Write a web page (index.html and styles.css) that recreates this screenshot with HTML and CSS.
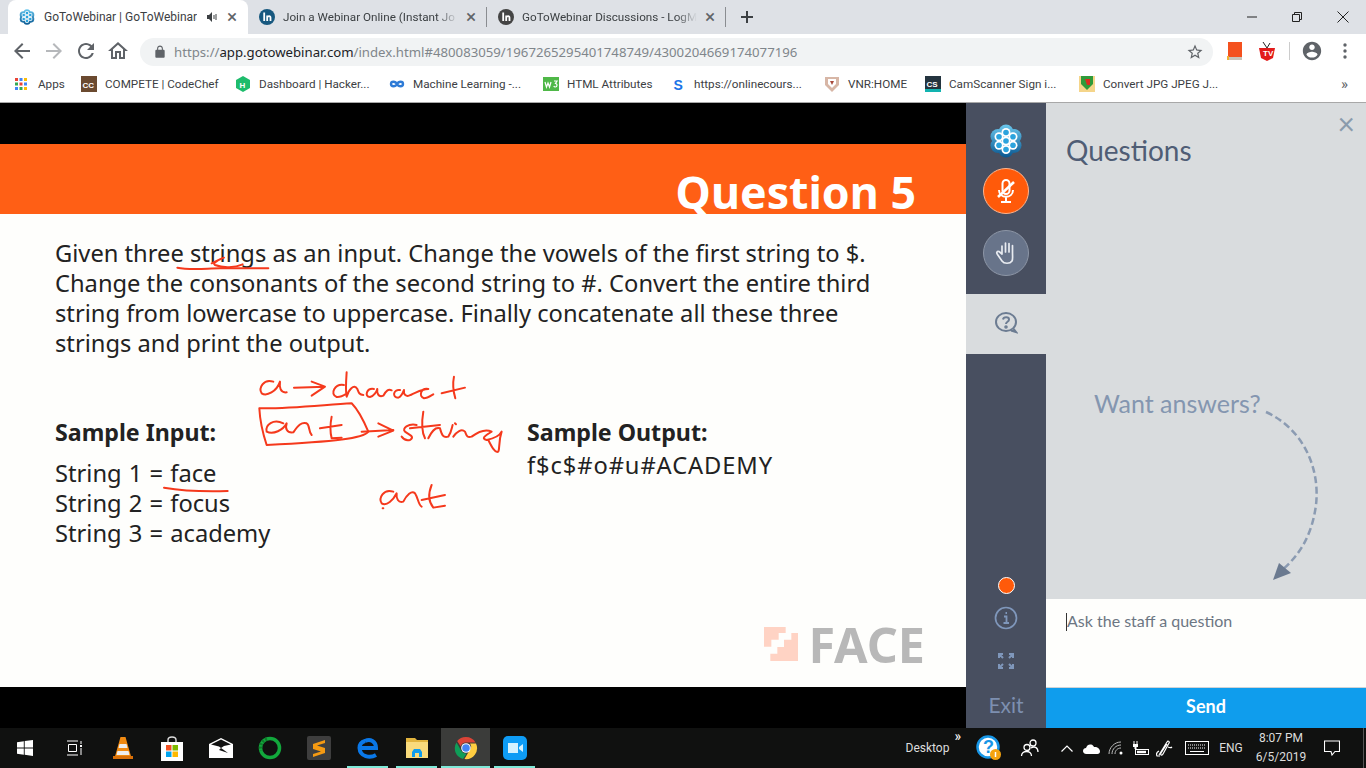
FILE: index.html
```html
<!doctype html>
<html lang="en">
  <head>
    <meta charset="UTF-8" />
    <meta name="viewport" content="width=device-width, initial-scale=1.0" />
    <title>GoToWebinar | GoToWebinar</title>
    <link rel="stylesheet" href="styles.css">
  </head>
  <body>
    <svg class="defs" width="0" height="0">
      <defs>
        <linearGradient id="gtw" gradientUnits="userSpaceOnUse" x1="0" y1="0" x2="0" y2="34">
          <stop offset="0" stop-color="#6ccaf0" />
          <stop offset="1" stop-color="#07558f" />
        </linearGradient>
        <symbol id="gtw-logo" viewBox="0 0 32 34">
          <g fill="url(#gtw)">
            <circle cx="16" cy="8" r="7.500" />
            <circle cx="8" cy="12.500" r="7.500" />
            <circle cx="24" cy="12.500" r="7.500" />
            <circle cx="8" cy="21.500" r="7.500" />
            <circle cx="24" cy="21.500" r="7.500" />
            <circle cx="16" cy="26" r="7.500" />
            <circle cx="16" cy="17" r="7.500" />
          </g>
          <g fill="#fff">
            <circle cx="16" cy="8.500" r="4.500" />
            <circle cx="9" cy="12.800" r="4.500" />
            <circle cx="23" cy="12.800" r="4.500" />
            <circle cx="9" cy="21.200" r="4.500" />
            <circle cx="23" cy="21.200" r="4.500" />
            <circle cx="16" cy="25.500" r="4.500" />
            <circle cx="16" cy="17" r="4.500" />
          </g>
          <g fill="#2ba3dd">
            <circle cx="16" cy="8.500" r="2.800" />
            <circle cx="9" cy="12.800" r="2.800" />
            <circle cx="23" cy="12.800" r="2.800" />
            <circle cx="9" cy="21.200" r="2.800" />
            <circle cx="23" cy="21.200" r="2.800" />
            <circle cx="16" cy="25.500" r="2.800" />
            <circle cx="16" cy="17" r="2.800" />
          </g>
        </symbol>
        <symbol id="in-logo" viewBox="0 0 16 16">
          <circle cx="8" cy="8" r="8" />
          <path fill="none" stroke="#fff" stroke-width="1.800" d="M5.200 3.500v8.500M8.200 12V6.500M8.200 8.300c.6-1.500 3.300-2 3.300.5V12" />
        </symbol>
      </defs>
    </svg>

    <header class="browser">
      <div class="tab-strip">
        <div class="tab active">
          <svg class="favicon"><use href="#gtw-logo" /></svg>
          <span class="tab-title">GoToWebinar | GoToWebinar</span>
          <svg class="tab-sound" width="12" height="12" viewBox="0 0 12 12"><path fill="#3c4043" d="M1 4h2l3-3v10L3 8H1z" /><path fill="none" stroke="#3c4043" d="M8 4v4M10 3v6" /></svg>
          <span class="tab-close">×</span>
        </div>
        <div class="tab">
          <svg class="favicon in-blue"><use href="#in-logo" /></svg>
          <span class="tab-title fade">Join a Webinar Online (Instant Jo</span>
          <span class="tab-close">×</span>
        </div>
        <div class="tab">
          <svg class="favicon in-dark"><use href="#in-logo" /></svg>
          <span class="tab-title fade">GoToWebinar Discussions - LogM</span>
          <span class="tab-close">×</span>
        </div>
        <svg class="new-tab" width="12" height="12" viewBox="0 0 12 12"><path stroke="#3c4043" stroke-width="2" d="M6 0v12M0 6h12" /></svg>
        <div class="window-btns">
          <svg width="10" height="10" viewBox="0 0 10 10"><path stroke="#222" d="M0 5h10" /></svg>
          <svg width="10" height="10" viewBox="0 0 10 10"><path fill="none" stroke="#222" d="M.500 2.500h7v7h-7zM2.500 2.500v-2h7v7h-2" /></svg>
          <svg width="12" height="12" viewBox="0 0 12 12"><path stroke="#222" d="M.5.500l11 11M11.500.500l-11 11" /></svg>
        </div>
      </div>

      <div class="toolbar">
        <svg class="nav-icon" viewBox="0 0 24 24"><path fill="#5f6368" d="M20 11H7.830l5.590-5.590L12 4l-8 8 8 8 1.410-1.410L7.830 13H20v-2z" /></svg>
        <svg class="nav-icon" viewBox="0 0 24 24"><path fill="#b6b8bb" d="M4 11h12.170l-5.590-5.590L12 4l8 8-8 8-1.410-1.410L16.170 13H4v-2z" /></svg>
        <svg class="nav-icon" viewBox="0 0 24 24"><path fill="#5f6368" d="M17.650 6.350C16.200 4.900 14.210 4 12 4c-4.420 0-7.990 3.580-7.990 8s3.570 8 7.990 8c3.730 0 6.840-2.550 7.730-6h-2.080c-.82 2.330-3.040 4-5.650 4-3.310 0-6-2.690-6-6s2.690-6 6-6c1.660 0 3.140.69 4.220 1.780L13 11h7V4l-2.350 2.350z" /></svg>
        <svg class="nav-icon" viewBox="0 0 24 24"><path fill="#5f6368" d="M12 5.690l5 4.500V18h-2v-6H9v6H7v-7.810l5-4.500M12 3L2 12h3v8h6v-6h2v6h6v-8h3L12 3z" /></svg>
        <div class="omnibox">
          <svg class="lock" width="14" height="14" viewBox="0 0 24 24"><path fill="#5f6368" d="M18 8h-1V6c0-2.760-2.240-5-5-5S7 3.240 7 6v2H6c-1.100 0-2 .9-2 2v10c0 1.100.9 2 2 2h12c1.100 0 2-.9 2-2V10c0-1.100-.9-2-2-2zm-2.900 0H8.900V6c0-1.710 1.390-3.100 3.100-3.100 1.710 0 3.100 1.390 3.100 3.100v2z" /></svg>
          <span class="url">https://<b>app.gotowebinar.com</b>/index.html#480083059/1967265295401748749/4300204669174077196</span>
          <svg class="star" width="18" height="18" viewBox="0 0 24 24"><path fill="#5f6368" d="M22 9.240l-7.190-.62L12 2 9.190 8.630 2 9.240l5.460 4.730L5.820 21 12 17.270 18.180 21l-1.630-7.030L22 9.240zM12 15.400l-3.760 2.270 1-4.280-3.320-2.880 4.380-.38L12 6.100l1.710 4.040 4.380.38-3.320 2.880 1 4.280L12 15.400z" /></svg>
        </div>
        <div class="extensions">
          <svg width="16" height="18" viewBox="0 0 16 18"><path fill="#f4511e" d="M1 0h14v15H1z" /><path fill="#c9c4ba" d="M1 15h14v3H1z" /><path fill="#f2b233" d="M0 14h2v4H0z" /></svg>
          <svg width="20" height="20" viewBox="0 0 20 20"><path fill="#e21b1b" d="M2 7h16l-2 10-6 3-6-3z" /><path stroke="#222" d="M10 7L6 1M10 7l3-5" /><text x="6" y="15" class="tv-text">TV</text></svg>
          <i class="ext-sep"></i>
          <svg width="22" height="22" viewBox="0 0 24 24"><path fill="#5f6368" d="M12 2C6.480 2 2 6.480 2 12s4.480 10 10 10 10-4.480 10-10S17.520 2 12 2zm0 3c1.660 0 3 1.340 3 3s-1.340 3-3 3-3-1.340-3-3 1.340-3 3-3zm0 14.200c-2.500 0-4.710-1.280-6-3.220.03-1.990 4-3.080 6-3.080 1.990 0 5.970 1.090 6 3.080-1.290 1.940-3.500 3.220-6 3.220z" /></svg>
          <svg width="4" height="16" viewBox="0 0 4 16"><g fill="#5f6368"><circle cx="2" cy="2" r="1.700" /><circle cx="2" cy="8" r="1.700" /><circle cx="2" cy="14" r="1.700" /></g></svg>
        </div>
      </div>

      <div class="bookmarks">
        <a class="bm bm-apps">
          <svg width="12" height="12" viewBox="0 0 12 12">
            <path fill="#ea4335" d="M0 0h3v3H0z" /><path fill="#4285f4" d="M4.500 0h3v3h-3z" /><path fill="#fbbc05" d="M9 0h3v3H9z" />
            <path fill="#34a853" d="M0 4.500h3v3H0z" /><path fill="#ea4335" d="M4.500 4.500h3v3h-3z" /><path fill="#4285f4" d="M9 4.500h3v3H9z" />
            <path fill="#4285f4" d="M0 9h3v3H0z" /><path fill="#34a853" d="M4.500 9h3v3h-3z" /><path fill="#fbbc05" d="M9 9h3v3H9z" />
          </svg>
          Apps
        </a>
        <a class="bm">
          <svg width="16" height="16" viewBox="0 0 16 16"><path fill="#6b4a30" d="M0 0h16v16H0z" /><text x="1.500" y="11.500" class="bm-glyph">CC</text></svg>
          COMPETE | CodeChef
        </a>
        <a class="bm">
          <svg width="16" height="16" viewBox="0 0 16 16"><path fill="#1ebc6c" d="M8 0l7 4v8l-7 4-7-4V4z" /><text x="4.500" y="11.500" class="bm-glyph">H</text></svg>
          Dashboard | Hacker...
        </a>
        <a class="bm">
          <svg width="16" height="16" viewBox="0 0 16 16"><path fill="none" stroke="#2e7bd6" stroke-width="2.400" d="M8 8C6.500 5 2 5 2 8s4.500 3 6 0 6-3 6 0-4.500 3-6 0z" /></svg>
          Machine Learning -...
        </a>
        <a class="bm bm-mid">
          <svg width="16" height="16" viewBox="0 0 16 16"><path fill="#4fb848" d="M0 1h16v14H0z" /><path fill="none" stroke="#fff" stroke-width="1.200" d="M2 6l1.500 5L5 7l1.500 4L8 6M11 5h3l-1.500 2.500c2 0 2 3.500-.2 3.500-.8 0-1.300-.4-1.500-1" /></svg>
          HTML Attributes
        </a>
        <a class="bm">
          <svg width="16" height="16" viewBox="0 0 16 16"><text x="3.500" y="13.500" class="bm-s">S</text></svg>
          https://onlinecours...
        </a>
        <a class="bm bm-short">
          <svg width="16" height="16" viewBox="0 0 16 16"><path fill="#d7b6a6" d="M1 1h14v8l-7 7-7-7z" /><path fill="#fff" d="M4 3h8v5l-4 4-4-4z" /><path fill="#a8493a" d="M6 5h4l-2 4z" /></svg>
          VNR:HOME
        </a>
        <a class="bm">
          <svg width="16" height="16" viewBox="0 0 16 16"><path fill="#24343f" d="M0 0h16v16H0z" /><path fill="#12b3b0" d="M0 13h16v3H0z" /><text x="1.500" y="10.500" class="bm-glyph">CS</text></svg>
          CamScanner Sign i...
        </a>
        <a class="bm">
          <svg width="16" height="16" viewBox="0 0 16 16"><path fill="#f5d58a" d="M0 0h16v16H0z" /><path fill="#2f9a3a" d="M2 0h12v8l-6 6-6-6z" /><path fill="#d92b20" d="M6 3h5v6H8z" /></svg>
          Convert JPG JPEG J...
        </a>
        <span class="bm-more">»</span>
      </div>
    </header>

    <main class="webinar">
      <section class="slide">
        <div class="slide-top"></div>
        <div class="slide-banner"><h1>Question 5</h1></div>
        <div class="slide-body">
          <p class="slide-q">Given three strings as an input. Change the vowels of the first string to $.<br>Change the consonants of the second string to #. Convert the entire third<br>string from lowercase to uppercase. Finally concatenate all these three<br>strings and print the output.</p>
          <div class="samples">
            <div class="sample-in">
              <h2>Sample Input:</h2>
              <p>String 1 = face<br>String 2 = focus<br>String 3 = academy</p>
            </div>
            <div class="sample-out">
              <h2>Sample Output:</h2>
              <p>f$c$#o#u#ACADEMY</p>
            </div>
          </div>
          <div class="face-logo">
            <svg width="34" height="34" viewBox="78 50 102 102">
              <path fill="#ffd3c4" d="M78 50h65v18h-21v20h-22v21H78z" />
              <path fill="#ffd3c4" d="M180 68v84H97v-22h21v-20h20V88h22V68z" />
            </svg>
            <span>FACE</span>
          </div>
        </div>
        <div class="slide-bottom"></div>

        <!-- presenter's pen marks, coordinates are from a 3x crop -->
        <svg class="ink" viewBox="0 103 966 625" width="966" height="625">
          <g transform="translate(170 235) scale(.3333)" fill="none" stroke="#f5391c" stroke-width="6" stroke-linecap="round" stroke-linejoin="round">
            <path d="M22 98C60 106 110 100 150 100L295 100" />
            <path d="M125 85C140 78 150 72 162 68M162 68C145 75 125 85 135 90C160 100 195 98 218 88" />
            <path d="M-18 758C40 768 110 770 173 768" />
            <path d="M310 440C280 430 265 460 275 475C290 485 320 470 330 440C328 455 330 475 350 472" />
            <path d="M372 458L465 455M425 440L465 455L425 482" />
            <path d="M522 450C495 445 478 478 500 486C510 488 520 482 530 476M530 412C528 440 526 465 530 485C535 465 552 445 562 462C566 472 568 480 580 480" />
            <path d="M612 462C590 458 582 485 600 486C612 484 620 470 622 462C620 475 625 488 640 482C650 465 655 462 665 466" />
            <path d="M690 465C670 462 665 488 685 488C695 485 700 470 702 465C700 478 708 488 722 480C745 470 755 462 775 462C752 458 745 485 762 490C772 490 780 484 790 478" />
            <path d="M852 425C848 445 850 470 856 490M815 475L885 458" />
            <path d="M270 520C350 522 460 510 545 505C560 520 580 555 595 590C580 610 500 620 290 630C280 600 270 560 268 520" />
            <path d="M340 565C310 550 285 570 290 590C310 600 340 585 350 565C345 580 350 595 370 592C385 570 395 560 410 565C420 570 415 590 425 600" />
            <path d="M485 545C480 570 480 590 485 610L515 608M450 580L515 570" />
            <path d="M575 590L670 585M625 565L670 587L625 605" />
            <path d="M740 570C715 565 695 580 705 590C720 600 735 605 720 615C710 618 700 612 695 605" />
            <path d="M760 530C755 560 755 590 765 610M720 580L810 570" />
            <path d="M775 610C785 590 795 575 810 580C815 600 820 610 835 605C845 590 845 580 848 570M855 565L858 568" />
            <path d="M850 605C860 590 875 580 885 590C890 600 890 610 905 605C925 590 945 580 965 590C950 600 930 610 950 615C975 610 990 600 995 590C985 620 990 640 985 650C975 655 965 635 955 615" />
            <path d="M670 770C640 760 625 790 635 805C650 815 670 795 680 775C678 790 685 805 700 800C710 780 725 765 735 775C745 790 745 810 755 815" />
            <path d="M638 820L640 820M785 750C775 775 775 800 790 818L825 812M755 795L825 780" />
          </g>
        </svg>
      </section>

      <nav class="rail">
        <svg class="rail-logo"><use href="#gtw-logo" /></svg>
        <button class="round-btn mic">
          <svg width="28" height="28" viewBox="0 0 28 28" fill="none" stroke="#fff" stroke-width="2">
            <rect x="10.500" y="3" width="7" height="14" rx="3.500" />
            <path d="M7 13c0 9 14 9 14 0M14 19v5M9 25h10" />
            <path d="M6 20L22 5" stroke-width="2.500" />
          </svg>
        </button>
        <button class="round-btn hand">
          <svg width="22" height="24" viewBox="0 0 22 24" fill="none" stroke="#e8ebf0" stroke-width="1.700" stroke-linecap="round" stroke-linejoin="round">
            <path d="M7 13V5M10.500 11V2M14 11V2.500M17.500 12V4.500M7 13L4 10.500C2 10 1 11.500 2.500 13.500L7 20C9 23 15 23 17 20C18 18.500 17.500 15 17.500 12" />
          </svg>
        </button>
        <div class="rail-tab">
          <svg width="24" height="24" viewBox="0 0 24 24" fill="none" stroke="#6c7c92" stroke-width="2">
            <path d="M22 12c0 5-4.500 9-10 9S2 17 2 12 6.500 3 12 3s10 4 10 9zM19 18l3 4-5-1.500" />
            <path d="M9 9.500c.5-3 6-3 6 0 0 2.500-3 2-3 4.500" />
            <circle cx="12" cy="17" r=".8" />
          </svg>
        </div>
        <div class="rail-foot">
          <i class="live-dot"></i>
          <svg class="rail-info" width="24" height="24" viewBox="0 0 24 24" fill="none" stroke="#7f97bb" stroke-width="1.700">
            <circle cx="12" cy="12" r="10.500" />
            <path d="M10 10.500h2.500V17M9.500 17h5.500M11.500 7h1.500" stroke-width="1.800" />
          </svg>
          <svg class="rail-expand" width="16" height="16" viewBox="0 0 16 16" fill="none" stroke="#7f97bb" stroke-width="2">
            <path d="M1 5V1h4M1 1l4 4M11 1h4v4M15 1l-4 4M1 11v4h4M1 15l4-4M15 11v4h-4M15 15l-4-4" />
          </svg>
          <span class="rail-exit">Exit</span>
        </div>
      </nav>

      <aside class="panel">
        <div class="panel-top">
          <span class="panel-close">×</span>
          <h2>Questions</h2>
          <p class="want">Want answers?</p>
          <svg class="want-arrow" width="60" height="180" viewBox="1265 405 60 180" fill="none">
            <path d="M1266 412C1305 430 1320 470 1316 505C1312 535 1300 555 1281 571" stroke="#8b9bb2" stroke-width="2.500" stroke-dasharray="7 3.500" />
            <path d="M1273 580L1279 563L1291 573z" fill="#6b7a90" />
          </svg>
        </div>
        <div class="ask"><i class="caret"></i>Ask the staff a question</div>
        <button class="send">Send</button>
      </aside>
    </main>

    <footer class="taskbar">
      <div class="task-apps">
        <span class="task"><svg width="16" height="16" viewBox="0 0 16 16"><path fill="#fff" d="M0 2.300l6.800-1v6.300H0zM7.700 1.100L16 0v7.600H7.700zM0 8.400h6.800v6.300l-6.800-1zM7.700 8.400H16V16l-8.300-1.200z" /></svg></span>
        <span class="task"><svg width="16" height="16" viewBox="0 0 16 16" fill="none" stroke="#fff"><path d="M1 1h11M1 15h11M2.500 4.500h8v7h-8zM15 1v3M15 8v7" /><path fill="#fff" d="M14 5h2v2h-2z" stroke="none" /></svg></span>
        <span class="task"><svg width="20" height="24" viewBox="0 0 20 24"><path fill="#f08a12" d="M7.500 1h5l6 21H1.500z" /><path fill="#eee" d="M6.500 8h7l1 4h-9zM4.500 15h11l1 4H3.500z" /><path fill="#d86f08" d="M0 20h20v3H0z" /></svg></span>
        <span class="task"><svg width="22" height="25" viewBox="0 0 22 25"><path fill="none" stroke="#ddd" stroke-width="1.400" d="M7 7V4c0-4 8-4 8 0v3" /><path fill="#fff" d="M0 6h22v19H0z" /><path fill="#f25022" d="M5 9h5.500v5.500H5z" /><path fill="#7fba00" d="M11.500 9H17v5.500h-5.500z" /><path fill="#00a4ef" d="M5 15.500h5.500V21H5z" /><path fill="#ffb900" d="M11.500 15.500H17V21h-5.500z" /></svg></span>
        <span class="task"><svg width="24" height="20" viewBox="0 0 24 20"><path fill="#fff" d="M0 6l12-6 12 6v14H0z" /><path fill="#111" d="M2 6.500l10-5 10 5-7 1.500-3 2-2-1.500z" /><path fill="#111" d="M12 10l7 5-9-3z" /></svg></span>
        <span class="task"><svg width="24" height="24" viewBox="0 0 24 24" fill="none" stroke="#12a83c" stroke-width="3.500"><circle cx="12" cy="12" r="9.500" /><path stroke="#0f7a2c" stroke-dasharray="2 1.500" d="M9 3C4 4.500 1.500 9 3 14.500" /></svg></span>
        <span class="task"><svg width="24" height="24" viewBox="0 0 24 24"><rect width="24" height="24" rx="2" fill="#3e3e3e" /><path fill="#f59a12" d="M18 4L6 8v5l8 2.500L6 18v3l12-4v-5l-8-2.500L18 7z" /></svg></span>
        <span class="task"><svg width="22" height="24" viewBox="0 0 22 24" fill="none" stroke="#0a78e8" stroke-width="4"><path d="M2.500 12H19C19 5 13 2.500 8 5M19 19C13 22.500 3 21 2.500 12 2.500 8 4.500 6 8 5" /></svg></span>
        <span class="task"><svg width="22" height="20" viewBox="0 0 22 20"><path fill="#e2b53e" d="M0 0h9l2 2h11v3H0z" /><path fill="#f9db7c" d="M0 4h22v16H0z" /><path fill="#0f9ded" d="M6 19v-5l2-3h6l2 3v5h-3v-4H9v4z" /></svg></span>
        <span class="task current">
          <svg width="24" height="24" viewBox="0 0 24 24">
            <path fill="#db4437" d="M12 1a11 11 0 0 1 9.500 5.500H12a5.500 5.500 0 0 0-5.300 4L3.200 5A11 11 0 0 1 12 1z" />
            <path fill="#0f9d58" d="M2.500 6.500l4.900 8.400a5.500 5.500 0 0 0 5.300 2.600L9 23A11 11 0 0 1 2.500 6.500z" />
            <path fill="#ffcd40" d="M22 7.500A11 11 0 0 1 10.500 23l4.900-8.400A5.500 5.500 0 0 0 16 7.500z" />
            <circle cx="12" cy="12" r="4.800" fill="#fff" />
            <circle cx="12" cy="12" r="3.800" fill="#4285f4" />
          </svg>
        </span>
        <span class="task"><svg width="24" height="24" viewBox="0 0 24 24"><rect width="24" height="24" rx="5" fill="#0e9cf5" /><path fill="#d5f2ff" d="M5 7h10v10H5zM16 11l4-3v8l-4-3z" /></svg></span>
      </div>

      <div class="tray">
        <span class="tray-desktop">Desktop<sup>»</sup></span>
        <span class="tray-help">
          <svg width="26" height="26" viewBox="0 0 26 26">
            <circle cx="12" cy="12" r="10.500" fill="#fff" stroke="#1796e6" stroke-width="2.500" />
            <text x="7" y="18" class="help-q">?</text>
            <circle cx="19.500" cy="19.500" r="5.500" fill="#f5a30f" />
            <path stroke="#fff" stroke-width="1.500" d="M19.500 17v5" />
          </svg>
        </span>
        <span class="tray-people"><svg width="20" height="18" viewBox="0 0 20 18" fill="none" stroke="#fff" stroke-width="1.300"><circle cx="7" cy="8.500" r="3" /><circle cx="13" cy="4" r="3" /><path d="M1.500 17c0-6 10-6 10 0M11 9c3-2 7-1 7 4" /></svg></span>
        <span class="tray-icon"><svg width="12" height="7" viewBox="0 0 12 7" fill="none" stroke="#fff" stroke-width="1.200"><path d="M.5 6.500L6 1l5.500 5.500" /></svg></span>
        <span class="tray-icon"><svg width="17" height="11" viewBox="0 0 17 11"><path fill="#fff" d="M3.500 11C1 11 0 9.500 0 8c0-2 1.500-3 3-3C4 2 6 1 8 1.500c1.500.3 2.700 1.300 3 2.500 3-.5 6 1.500 6 4.500 0 1.500-1 2.500-2.500 2.500z" /></svg></span>
        <span class="tray-icon"><svg width="16" height="14" viewBox="0 0 16 14" fill="none" stroke="#bbb" stroke-width="1"><path d="M1 13C1 6.500 6.500 1 13 1M4 13C4 8 8 4 13 4M7 13c0-3.500 2.500-6 6-6" /><circle cx="13" cy="12" r="1.500" fill="#fff" stroke="none" /></svg></span>
        <span class="tray-icon"><svg width="17" height="14" viewBox="0 0 17 14"><path fill="#fff" d="M2 0v3M5 0v3" stroke="#fff" /><path fill="#fff" d="M1 3h5v3H1zM2.500 6h2v2h-2zM3 8h14v6H3z" /><path fill="#111" d="M4 9h12v4H4z" /><path fill="#fff" d="M5 9.800h9v2.400H5z" /></svg></span>
        <span class="tray-icon"><svg width="17" height="18" viewBox="0 0 17 18" fill="none" stroke="#fff" stroke-width="1.200"><path d="M3 16l8-13c1-2 3 0 2 1L7 15c-1 2-3 1-2-1l6-9M12 8c2 1 3 1 4 0M3 12C1 13 0 15 1 17h3" /></svg></span>
        <span class="tray-kbd"><svg width="24" height="14" viewBox="0 0 24 14" fill="none" stroke="#fff"><rect x=".5" y=".5" width="23" height="13" /><path stroke-dasharray="1 1" d="M3 4h18M3 7h18" /><path d="M5 10.500h14" /></svg></span>
        <span class="tray-lang">ENG</span>
        <span class="tray-clock">8:07 PM<br>6/5/2019</span>
        <span class="tray-note"><svg width="16" height="16" viewBox="0 0 16 16" fill="none" stroke="#fff" stroke-width="1.100"><path d="M.5 1h15v10.500h-4.500L8 15l-1-3.500H.5z" /></svg></span>
        <span class="tray-end"></span>
      </div>
    </footer>
  </body>
</html>
```

FILE: styles.css
```css
* {
  box-sizing: border-box;
}
html,
body {
  margin: 0;
  height: 100%;
  overflow: hidden;
}
body {
  width: 1366px;
  height: 768px;
  display: flex;
  flex-direction: column;
  font-family: "Noto Sans", sans-serif;
  background: #000;
}
.defs {
  position: absolute;
}
h1,
h2,
p {
  margin: 0;
  font-weight: normal;
}

/* browser chrome */
.browser {
  height: 103px;
  background: #fff;
  border-bottom: 1px solid #a8a8a8;
  color: #3c4043;
  font-family: Roboto, sans-serif;
}
.tab-strip {
  height: 34px;
  background: #dee1e6;
  display: flex;
  align-items: stretch;
  padding-left: 8px;
}
.tab {
  width: 239px;
  display: flex;
  align-items: center;
  gap: 8px;
  padding: 0 11px;
  font-size: 12px;
  position: relative;
}
.tab.active {
  width: 240px;
  background: #fff;
  border-radius: 8px 8px 0 0;
  gap: 9px;
}
.tab:nth-child(n + 2)::after {
  content: "";
  position: absolute;
  right: 0;
  top: 7px;
  height: 20px;
  border-right: 1px solid #8a8d91;
}
.favicon {
  width: 16px;
  height: 16px;
  flex: none;
}
.in-blue {
  fill: #17587f;
}
.in-dark {
  fill: #444;
}
.tab-title {
  flex: 1;
  overflow: hidden;
  white-space: nowrap;
}
.tab-title.fade {
  font-size: 11.700px;
  -webkit-mask-image: linear-gradient(to right, #000 88%, transparent);
  mask-image: linear-gradient(to right, #000 88%, transparent);
}
.tab-sound {
  flex: none;
}
.tab-close {
  flex: none;
  width: 10px;
  font-size: 19px;
  line-height: 10px;
  text-align: center;
  color: #5f6368;
}
.new-tab {
  align-self: center;
  margin-left: 15px;
}
.window-btns {
  margin-left: auto;
  width: 102px;
  margin-right: 17px;
  display: flex;
  justify-content: space-between;
  align-items: center;
}
.toolbar {
  height: 32px;
  display: flex;
  align-items: center;
  padding-left: 10px;
  padding-top: 4px;
}
.nav-icon {
  width: 24px;
  height: 24px;
  margin-right: 8px;
  margin-bottom: 2px;
  flex: none;
}
.omnibox {
  width: 1073px;
  height: 28px;
  margin-left: 2px;
  border-radius: 14px;
  background: #f1f3f4;
  display: flex;
  align-items: center;
  padding: 0 9px 0 13px;
  font-family: "Noto Sans", sans-serif;
  font-size: 13.200px;
  color: #80868b;
}
.url {
  margin-left: 7px;
  white-space: nowrap;
}
.url b {
  font-weight: normal;
  color: #202124;
}
.star {
  margin-left: auto;
}
.extensions {
  flex: 1;
  display: flex;
  align-items: center;
  padding-left: 14px;
  margin-bottom: 2px;
}
.extensions svg:nth-child(2) {
  margin-left: 14px;
}
.ext-sep {
  height: 18px;
  border-left: 1px solid #ccc;
  margin: 0 11px 0 12px;
}
.extensions svg:nth-child(5) {
  margin-left: 20px;
}
.tv-text {
  font: bold 8px "Liberation Sans", sans-serif;
  fill: #fff;
}
.bookmarks {
  height: 36px;
  display: flex;
  align-items: center;
  padding-left: 15px;
  font-size: 11.700px;
}
.bm {
  width: 154px;
  flex: none;
  display: flex;
  align-items: center;
  gap: 8px;
  white-space: nowrap;
}
.bm svg {
  flex: none;
}
.bm-apps {
  width: 66px;
  gap: 11px;
}
.bm-mid {
  width: 127px;
}
.bm-short {
  width: 101px;
}
.bm-glyph {
  font: bold 8px "Liberation Sans", sans-serif;
  fill: #fff;
}
.bm-s {
  font: bold 14px "Liberation Sans", sans-serif;
  fill: #1a73e8;
}
.bm-more {
  margin-left: auto;
  margin-right: 18px;
  font-size: 15px;
  color: #5f6368;
}

/* main area */
.webinar {
  flex: 1;
  min-height: 0;
  display: flex;
}
.slide {
  width: 966px;
  position: relative;
  display: flex;
  flex-direction: column;
}
.slide-top {
  height: 41px;
  background: #000;
}
.slide-banner {
  height: 70px;
  background: #ff5f15;
  display: flex;
  align-items: flex-end;
  justify-content: flex-end;
  padding-right: 50px;
}
.slide-banner h1 {
  font-size: 44.700px;
  font-weight: 700;
  line-height: 44px;
  color: #fff;
}
.slide-body {
  flex: 1;
  background: #fefefc;
  color: #222;
  padding: 24px 0 0 55px;
  font-size: 23.700px;
  line-height: 30px;
  position: relative;
}
.samples {
  display: flex;
  margin-top: 59px;
}
.samples h2 {
  font-size: 23.200px;
  font-weight: 700;
  line-height: 30px;
  margin-bottom: 11px;
}
.sample-in {
  width: 472px;
}
.sample-in p {
  word-spacing: 1px;
}
.sample-out h2 {
  margin-bottom: 3px;
}
.sample-out p {
  letter-spacing: 0.9px;
}
.face-logo {
  position: absolute;
  right: 41px;
  bottom: 26px;
  display: flex;
  align-items: center;
  gap: 10px;
  font-size: 48.500px;
  font-weight: 700;
  line-height: 34px;
  color: #b8b8b8;
}
.slide-bottom {
  height: 41px;
  background: #000;
}
.ink {
  position: absolute;
  left: 0;
  top: 0;
  pointer-events: none;
}

/* left rail of the webinar panel */
.rail {
  width: 80px;
  background: #484f60;
  display: flex;
  flex-direction: column;
  align-items: center;
  font-family: Lato, sans-serif;
}
.rail-logo {
  width: 32px;
  height: 34px;
  margin-top: 21px;
}
.round-btn {
  width: 46px;
  height: 46px;
  border-radius: 50%;
  padding: 0;
  display: flex;
  align-items: center;
  justify-content: center;
}
.mic {
  margin-top: 10px;
  background: #ff5a0a;
  border: 1px solid #ffb48c;
}
.hand {
  margin-top: 16px;
  background: #68748a;
  border: 1px solid #8d96a6;
}
.rail-tab {
  width: 80px;
  height: 60px;
  margin-top: 18px;
  background: #d9dcde;
  display: flex;
  align-items: center;
  justify-content: center;
  padding-bottom: 4px;
}
.rail-foot {
  margin-top: auto;
  display: flex;
  flex-direction: column;
  align-items: center;
}
.live-dot {
  width: 17px;
  height: 17px;
  border-radius: 50%;
  background: #ff5a0a;
  border: 1.500px solid #fff;
}
.rail-info {
  margin-top: 12px;
}
.rail-expand {
  margin-top: 23px;
}
.rail-exit {
  margin-top: 23px;
  height: 36px;
  font-size: 21px;
  line-height: 26px;
  color: #7d8fb0;
}

/* questions panel */
.panel {
  width: 320px;
  display: flex;
  flex-direction: column;
  font-family: Lato, sans-serif;
}
.panel-top {
  flex: 1;
  background: #d9dcde;
  position: relative;
  padding: 27px 0 0 20px;
}
.panel-top h2 {
  font-size: 28px;
  line-height: 40px;
  color: #4f5d75;
}
.panel-close {
  position: absolute;
  right: 11px;
  top: 3px;
  font-size: 30px;
  line-height: 34px;
  color: #8a9bac;
}
.want {
  margin: 215px 0 0 28px;
  font-size: 25px;
  line-height: 36px;
  color: #8496b0;
}
.want-arrow {
  position: absolute;
  left: 219px;
  top: 302px;
}
.ask {
  height: 89px;
  background: #fefefc;
  padding: 12px 20px;
  font-size: 16px;
  line-height: 20px;
  color: #6c7683;
  display: flex;
  border-bottom: 1px solid #cfd3d6;
}
.caret {
  width: 1px;
  height: 18px;
  margin-top: 2px;
  background: #333;
}
.send {
  height: 40px;
  border: 0;
  padding: 0 0 4px;
  background: #0f9ded;
  color: #fff;
  font-family: Lato, sans-serif;
  font-size: 18px;
  font-weight: 700;
}

/* windows taskbar */
.taskbar {
  height: 40px;
  background: #101110;
  color: #ddd;
  display: flex;
  justify-content: space-between;
  font-family: Roboto, sans-serif;
  font-size: 12px;
}
.task-apps {
  display: flex;
}
.task {
  width: 49px;
  height: 40px;
  display: flex;
  align-items: center;
  justify-content: center;
  position: relative;
}
.task:nth-child(8)::after,
.task:nth-child(9)::after,
.task:nth-child(10)::after,
.task:nth-child(11)::after {
  content: "";
  position: absolute;
  left: 4px;
  right: 4px;
  bottom: 0;
  height: 2px;
  background: #7fe9d8;
}
.task.current {
  background: #3b3c3a;
}
.task.current::after {
  left: 0;
  right: 0;
}
.tray {
  display: flex;
  align-items: center;
  height: 40px;
}
.tray > span {
  display: flex;
  align-items: center;
  justify-content: center;
  flex: none;
  height: 40px;
}
.tray-desktop {
  width: 75px;
  justify-content: flex-start !important;
  padding-left: 8px;
  font-size: 12px;
  position: relative;
}
.tray-desktop sup {
  position: absolute;
  left: 57px;
  top: 0;
  font-size: 14px;
  line-height: 16px;
  color: #fff;
}
.help-q {
  font: bold 18px "Liberation Sans", sans-serif;
  fill: #1796e6;
}
.tray-help {
  width: 32px;
}
.tray-people {
  width: 50px;
}
.tray-icon {
  width: 24.500px;
}
.tray-kbd {
  width: 40px;
}
.tray-lang {
  width: 28px;
  font-size: 12px;
}
.tray-clock {
  width: 72px;
  text-align: center;
  line-height: 19px;
  font-size: 12px;
}
.tray-note {
  width: 30px;
}
.tray-end {
  width: 19px;
  padding-left: 14px;
}
.tray-end::before {
  content: "";
  display: block;
  height: 40px;
  border-left: 1px solid #555;
}
```
